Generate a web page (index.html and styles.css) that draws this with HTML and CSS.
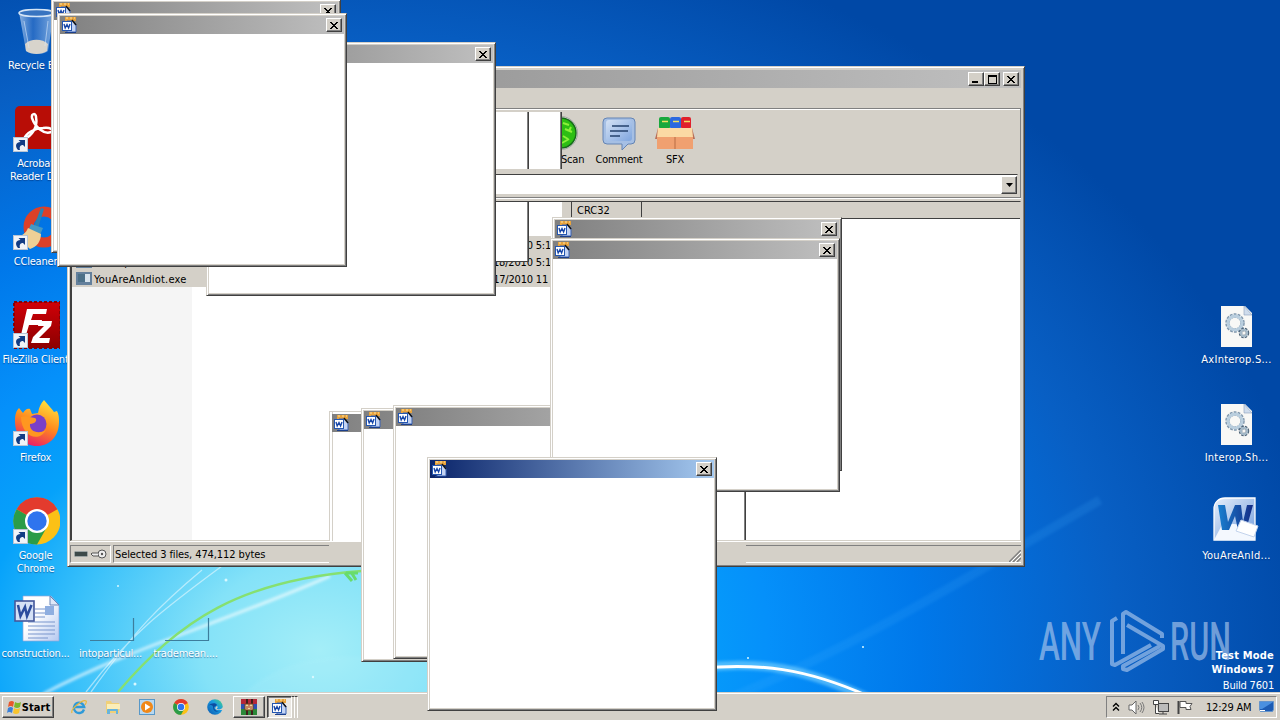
FILE: index.html
```html
<!doctype html>
<html>
<head>
	<meta charset="utf-8">
	<title>Desktop</title>
	<link rel="stylesheet" href="styles.css">
</head>
<body>
<svg class="defs" width="0" height="0">
	<defs>
		<linearGradient id="gFox" x1="0.7" y1="0" x2="0.3" y2="1"><stop offset="0" stop-color="#ffe23c"/><stop offset="0.5" stop-color="#ff8a1e"/><stop offset="1" stop-color="#e8196b"/></linearGradient>
		<linearGradient id="gRed" x1="0" y1="0" x2="0" y2="1"><stop offset="0" stop-color="#d00008"/><stop offset="1" stop-color="#8c0000"/></linearGradient>
		<linearGradient id="gPage" x1="0" y1="0" x2="1" y2="1"><stop offset="0.4" stop-color="#fff"/><stop offset="1" stop-color="#b4c8f0"/></linearGradient>
		<linearGradient id="gBlue" x1="0" y1="0" x2="1" y2="1"><stop offset="0" stop-color="#e8f0fb"/><stop offset="1" stop-color="#6f9bdc"/></linearGradient>
		<linearGradient id="gW" x1="0" y1="0" x2="1" y2="0"><stop offset="0" stop-color="#1a80d0"/><stop offset="1" stop-color="#142c86"/></linearGradient>
		<linearGradient id="gEdge" x1="0" y1="1" x2="1" y2="0"><stop offset="0" stop-color="#0c58b0"/><stop offset="0.6" stop-color="#1a9ce0"/><stop offset="1" stop-color="#4fd878"/></linearGradient>
		<linearGradient id="gBin" x1="0" y1="0" x2="1" y2="0"><stop offset="0" stop-color="#bcd4f0" stop-opacity=".75"/><stop offset="0.4" stop-color="#3b78cc" stop-opacity=".6"/><stop offset="1" stop-color="#b4d0f0" stop-opacity=".7"/></linearGradient>
	</defs>
	<symbol id="word16" viewBox="0 0 16 16">
		<rect x="4" y="0" width="11" height="4" fill="#e8a33c"/>
		<path d="M5 1h2M9 1h2M13 1h1" stroke="#fbe3a8"/>
		<path d="M6 4h6l3 3v8H6z" fill="#c4d4f4" stroke="#3a62b4"/>
		<path d="M11 3l4 5" stroke="#111" stroke-width="1.400"/>
		<rect x="1.500" y="4.500" width="9" height="9" fill="#fff" stroke="#2456b0"/>
		<path d="M3 7l1.200 4L6 7.500 7.600 11 9 7" fill="none" stroke="#1746a8" stroke-width="1.400"/>
		<path d="M4 15.500h11" stroke="#1b3f8c"/>
	</symbol>
	<symbol id="x" viewBox="0 0 8 7"><path d="M0 0h2v1h1v1h2v-1h1v-1h2v1h-1v1h-1v1h-1v1h1v1h1v1h1v1h-2v-1h-1v-1h-2v1h-1v1h-2v-1h1v-1h1v-1h1v-1h-1v-1h-1v-1h-1z"/></symbol>
	<symbol id="chrome" viewBox="0 0 48 48">
		<circle cx="24" cy="24" r="23.500" fill="#fbc116"/>
		<path d="M24 24L3.600 12.200A23.500 23.500 0 0 1 44.400 12.200z" fill="#e33b2e"/>
		<path d="M3.600 12.200A23.500 23.500 0 0 0 24 47.500L34 30 24 24z" fill="#2b9c48"/>
		<circle cx="24" cy="24" r="12" fill="#fff"/><circle cx="24" cy="24" r="9.700" fill="#2f74ee"/>
	</symbol>
	<symbol id="shortcut" viewBox="0 0 15 15">
		<rect x=".5" y=".5" width="14" height="14" fill="#f0f3f8" stroke="#b8c4d4"/>
		<path d="M5 13C1.500 9 3 5 7.500 5L5.500 3H12v7L10 8C8 8 6 9 7 13z" fill="#123c84"/>
	</symbol>
	<symbol id="dll" viewBox="0 0 48 48">
		<path d="M8 5h24l7 7v34H8z" fill="#f8f8f6"/><path d="M31 5v9h8z" fill="#cfdcec" stroke="#8aa0bc" stroke-width=".6"/>
		<circle cx="22" cy="22" r="7.500" fill="none" stroke="#7f96ac" stroke-width="4.500" stroke-dasharray="2.400 1"/>
		<circle cx="22" cy="22" r="7" fill="none" stroke="#b9cede" stroke-width="3"/>
		<circle cx="31" cy="32" r="3.500" fill="none" stroke="#4e6478" stroke-width="3.500" stroke-dasharray="2 .8"/>
		<circle cx="31" cy="32" r="3.200" fill="none" stroke="#a5bac9" stroke-width="2"/>
	</symbol>
</svg>

<div class="desktop">
	<svg class="wallpaper" width="1280" height="720" viewBox="0 0 1280 720" fill="none">
		<path class="haze" d="M245 692C290 655 330 652 430 660V692z" fill="#b8f2fa" opacity=".15"/>
		<path class="haze" d="M43 694C130 648 220 624 330 576" stroke="#fff" stroke-width="2.500" opacity=".75"/>
		<path d="M86 692C130 634 165 608 222 566M91 692C135 630 160 605 202 570" stroke="#fff" stroke-width="1.300" opacity=".5"/>
		<path d="M118 692C180 620 240 580 362 571" stroke="#86e070" stroke-width="2.300"/>
		<path d="M345 573l7 8M351 572l5 8M346 573h12" stroke="#68dc6c" stroke-width="3"/>
		<path class="haze" d="M700 710C830 660 930 600 1100 500" stroke="#4cb4ff" stroke-width="9" opacity=".14"/>
		<path class="haze" d="M700 668C760 660 805 668 872 700" stroke="#7fd4ff" stroke-width="9" opacity=".6"/>
		<path d="M700 668C760 663 805 668 868 696" stroke="#fff" stroke-width="3"/>
		<g fill="#d8f8ff"><circle cx="226" cy="580" r="1.500"/><circle cx="118" cy="586" r="1"/><circle cx="135" cy="684" r="1.500"/><circle cx="313" cy="677" r="1.200"/><circle cx="863" cy="647" r="1"/><circle cx="748" cy="658" r="1"/></g>
	</svg>

	<div class="icons left">
		<div class="icon">
			<svg viewBox="0 0 48 48"><path d="M7 5l7 39c5 4 18 4 22 0l6-39z" fill="url(#gBin)"/><path d="M13 37c6-6 18-5 23 0l-1 7c-5 4-16 4-21 0z" fill="#d8d4cc"/><ellipse cx="24.500" cy="6" rx="17.500" ry="3.500" fill="#3874c0" stroke="#d5e5f6" stroke-width="1.500"/><path d="M12 14l5 27M36 14l-3 25" stroke="#d8e8fa" opacity=".6"/></svg>
			<span>Recycle Bin</span>
		</div>
		<div class="icon">
			<svg viewBox="0 0 48 48"><rect x="3" y="1" width="44" height="43" rx="5" fill="#b80d06"/><path d="M12 34c8-3 14-12 12-22 0-4-5-4-4 1 3 9 12 17 19 14 4-2-1-5-8-4-8 0-17 5-19 11z" fill="none" stroke="#fff" stroke-width="2.500"/><use href="#shortcut" x="1" y="32" width="15" height="15"/></svg>
			<span>Acrobat<br>Reader DC</span>
		</div>
		<div class="icon">
			<svg viewBox="0 0 48 48"><circle cx="32" cy="24" r="15.500" fill="none" stroke="#dc4028" stroke-width="10"/><path d="M29 5l3 1-6 19-4-2z" fill="#2882b4"/><path d="M19 21l12 4-3 7-11-6z" fill="#4599c4"/><path d="M16 25l13 6c0 7-4 13-11 15L5 34c5-1 9-4 11-9z" fill="#eed096"/><use href="#shortcut" x="1" y="32" width="15" height="15"/></svg>
			<span>CCleaner</span>
		</div>
		<div class="icon">
			<svg viewBox="0 0 48 48"><rect x="2" y="1" width="46" height="46" fill="url(#gRed)" stroke="#850008" stroke-width="2" stroke-dasharray="3 2"/><path d="M15 8h20l-1 5H21l-2 6h11l-1 5H17l-3 10H9z" fill="#fff"/><path d="M27 20h13l-1 5-12 12h11l-1 5H19l2-6 11-11h-6z" fill="#fff"/><use href="#shortcut" x="1" y="32" width="15" height="15"/></svg>
			<span>FileZilla Client</span>
		</div>
		<div class="icon">
			<svg viewBox="0 0 48 48"><path d="M3 22c0-6 1-10 4-13l4 5c2-3 4-5 7-4l2 5 6-1c1-6 3-10 6-13 4 5 8 9 10 12l3-1c2 4 2 7 2 11 0 14-9 24-22 24S3 37 3 22z" fill="url(#gFox)"/><circle cx="25" cy="25" r="9.500" fill="#7a3fc8"/><path d="M9 18c5-2 8 0 14 1 3 2 0 6-5 6-1 7 8 11 16 6-8 14-25 5-25-13z" fill="#ff9720"/><use href="#shortcut" x="1" y="32" width="15" height="15"/></svg>
			<span>Firefox</span>
		</div>
		<div class="icon">
			<svg viewBox="0 0 48 48"><use href="#chrome" x="1" y="0" width="48" height="48"/><use href="#shortcut" x="1" y="32" width="15" height="15"/></svg>
			<span>Google<br>Chrome</span>
		</div>
		<div class="icon">
			<svg viewBox="0 0 48 48"><path d="M11 1h28l8 9v36H11z" fill="url(#gPage)" stroke="#8fa8d8" stroke-width=".7"/><path d="M38 1v9h9z" fill="#dfe8f8" stroke="#6a86b8"/><path d="M23 14h10M23 18h10M23 22h10M16 27h27M16 31h27M16 35h27M16 39h27M16 43h20" stroke="#7895cc"/><rect x="33" y="11" width="9" height="9" fill="#8eaee0"/><rect x="3" y="6" width="19" height="20" fill="#d5e1f6" stroke="#44589c" stroke-width="1.600"/><path d="M6 10l2.500 11L13 12l2 9 4.500-11" fill="none" stroke="#2b4c9e" stroke-width="2.500"/></svg>
			<span>construction...</span>
		</div>
		<div class="icon">
			<svg viewBox="0 0 48 48"><path d="M3 45.500h43.500V23" fill="none" stroke="#3d7d9c" stroke-width="1.200"/></svg>
			<span>intoparticul...</span>
		</div>
		<div class="icon">
			<svg viewBox="0 0 48 48"><path d="M3 45.500h43.500V23" fill="none" stroke="#3d7d9c" stroke-width="1.200"/></svg>
			<span>trademean....</span>
		</div>
	</div>

	<div class="icons right">
		<div class="icon">
			<svg><use href="#dll"/></svg>
			<span>AxInterop.S...</span>
		</div>
		<div class="icon">
			<svg><use href="#dll"/></svg>
			<span>Interop.Sh...</span>
		</div>
		<div class="icon">
			<svg viewBox="0 0 48 48"><path d="M1 43V12C1 5 6 1 12 1h30v42z" fill="url(#gBlue)" stroke="#fff" stroke-width="1.300"/><path d="M1 43l9-17 32 3v14z" fill="#f4f8fe"/><path d="M5 8h7l3 17 7-17h6l2 17 4-17h-3V8h9l-7 25h-8l-3-14-6 14H9z" fill="url(#gW)"/><path d="M28 23l17 6-4 11-18-6z" fill="#fff" stroke="#c3d3ec"/></svg>
			<span>YouAreAnId...</span>
		</div>
	</div>

	<svg class="watermark" width="196" height="66" viewBox="0 0 196 66">
		<text x="1" y="52" textLength="62" lengthAdjust="spacingAndGlyphs">ANY</text>
		<text x="132" y="52" textLength="61" lengthAdjust="spacingAndGlyphs">RUN</text>
		<path d="M85 46V6l3-2 36 22v4M89 17l36 21v3L89 62l-4-1v-3l37-20M79 10l-5 3v43l3 1 36-20"/>
	</svg>
	<div class="build"><b>Test Mode</b><b>Windows 7</b><span>Build 7601</span></div>

	<div class="rar">
		<div class="titlebar">
			<button><svg viewBox="0 0 8 7"><path d="M0 5h6v2H0z"/></svg></button><button><svg class="max" viewBox="0 0 9 9"><path d="M0 0h9v9H0zM1 2v6h7V2z" fill-rule="evenodd"/></svg></button><button class="close"><svg><use href="#x"/></svg></button>
		</div>
		<div class="menu"></div>
		<div class="rebar">
			<div class="toolbar">
				<div class="tool scan">
					<svg viewBox="0 0 36 36"><circle cx="18" cy="18" r="16.500" fill="#fff" stroke="#777" stroke-width=".6"/><circle cx="18" cy="18" r="15" fill="#2dbe14" stroke="#17691a" stroke-width="1.500"/><path d="M20 8l6 2M22 14l7 3M20 21l5 3M28 12l-2 4M19 28l7-4" stroke="#8cf03a" stroke-width="2" fill="none"/></svg>
					<span>Scan</span>
				</div>
				<div class="tool">
					<svg viewBox="0 0 36 36"><path d="M6 3h24q4 0 4 4v18q0 4-4 4l-3 0-6 6 0-6H6q-4 0-4-4V7q0-4 4-4z" fill="#a5bfe4" stroke="#6484b4"/><rect x="5" y="5" width="26" height="21" rx="3" fill="url(#gBlue)" opacity=".7"/><path d="M11 11h17M9 16h18M9 21h10" stroke="#24426c" stroke-width="1.600"/></svg>
					<span>Comment</span>
				</div>
				<div class="tool">
					<svg class="wide" viewBox="0 0 40 36"><rect x="4" y="2" width="11" height="12" rx="2" fill="#18a83c"/><rect x="15" y="2" width="11" height="12" rx="2" fill="#2b68e0"/><rect x="26" y="2" width="10" height="12" rx="2" fill="#e0202c"/><path d="M4 6.500h32" stroke="#f0e060" stroke-width="1.500" stroke-dasharray="6 5" stroke-dashoffset="-3"/><path d="M3 13L0 24h40l-3-11z" fill="#b8705a"/><path d="M3 13h34l1 9H2z" fill="#fbd9a4"/><path d="M2 22h36v12H2z" fill="#f0a070"/><path d="M20 22v12" stroke="#b86c44"/></svg>
					<span>SFX</span>
				</div>
			</div>
			<div class="address"><button><svg viewBox="0 0 7 4"><path d="M0 0h7L3.500 4z"/></svg></button></div>
		</div>
		<div class="list">
			<div class="head"><span>CRC32</span></div>
			<div class="row parent"></div>
			<div class="row"><i></i><span></span><em>18/2010 5:1</em></div>
			<div class="row"><i></i><span>Interop.Sh</span><em>18/2010 5:1</em></div>
			<div class="row"><i></i><span>YouAreAnIdiot.exe</span><em class="exe">17/2010 11</em></div>
		</div>
		<div class="status">
			<div class="pane keys">
				<svg width="36" height="14" viewBox="0 0 36 14"><rect x="1.500" y="4.500" width="13" height="5" rx="1" fill="#3d4a4a" stroke="#9ca4a4"/><circle cx="29" cy="7" r="4" fill="#eee" stroke="#555"/><circle cx="29" cy="7" r="1.200" fill="#555"/><path d="M25 6h-6l-1 1 2 2h5" fill="#eee" stroke="#555"/></svg>
			</div>
			<div class="pane info">Selected 3 files, 474,112 bytes</div>
			<div class="gap"></div>
			<div class="pane end"><svg width="12" height="12" viewBox="0 0 12 12"><path d="M0 12L12 0M4 12l8-8M8 12l4-4" stroke="#808080" stroke-width="1.500"/><path d="M2 12L12 2M6 12l6-6" stroke="#fff"/></svg></div>
		</div>
	</div>

	<!-- leftovers of moved popups, painted over the archiver -->
	<div class="ghost g1"></div>
	<div class="ghost g2"></div>
	<div class="ghost g3"></div>
	<div class="ghost g4"></div>
	<div class="ghost g5"></div>

	<div class="popup p1"><div class="titlebar"><svg class="app"><use href="#word16"/></svg></div></div>
	<div class="popup p2"><div class="titlebar"><svg class="app"><use href="#word16"/></svg></div></div>
	<div class="popup p3"><div class="titlebar"><svg class="app"><use href="#word16"/></svg></div></div>
	<div class="popup p4"><div class="titlebar"><svg class="app"><use href="#word16"/></svg><button><svg><use href="#x"/></svg></button></div></div>
	<div class="popup p5"><div class="titlebar"><svg class="app"><use href="#word16"/></svg><button><svg><use href="#x"/></svg></button></div></div>
	<div class="popup p6"><div class="titlebar"><svg class="app"><use href="#word16"/></svg><button><svg><use href="#x"/></svg></button></div></div>
	<div class="popup p7"><div class="titlebar"><svg class="app"><use href="#word16"/></svg><button><svg><use href="#x"/></svg></button></div></div>
	<div class="popup p8"><div class="titlebar"><svg class="app"><use href="#word16"/></svg><button><svg><use href="#x"/></svg></button></div></div>

	<div class="taskbar">
		<button class="start">
			<svg width="16" height="16" viewBox="0 0 16 16"><path d="M3 3q3-2 5 0L7 8q-2-2-5 0z" fill="#e8582c"/><path d="M9 3q3 2 6 0l-1 5q-3 2-6 0z" fill="#7cb82c"/><path d="M2 9q3-2 5 0l-1 5q-3-2-5 0z" fill="#3a80d8"/><path d="M8 9q3 2 6 0l-1 5q-3 2-6 0z" fill="#f8c42c"/></svg>
			Start
		</button>
		<div class="quick">
			<svg viewBox="0 0 16 16"><path d="M13 10.500A5.200 5.200 0 1 1 13.200 8H4" fill="none" stroke="#2f9ad8" stroke-width="2.400"/><path d="M1 14C-1 10 12 0 15 2q1 1-1 4" fill="none" stroke="#e8b83c" stroke-width="1.200"/></svg>
			<svg viewBox="0 0 16 16"><path d="M1 2h5l1 2h7v10H1z" fill="#f0d078"/><path d="M2 5h13v5H2z" fill="#fbeeb8"/><path d="M2 15v-4q0-1 1-1h9q1 0 1 1v4h-2v-3H5v3z" fill="#68b4dc"/></svg>
			<svg viewBox="0 0 16 16"><rect x=".5" y=".5" width="15" height="15" fill="#b8d8f0" stroke="#5898c8"/><circle cx="8" cy="8" r="6" fill="#f08818"/><path d="M6 4.500v7l5.500-3.500z" fill="#fff"/></svg>
			<svg><use href="#chrome"/></svg>
			<svg viewBox="0 0 16 16"><circle cx="8" cy="8" r="7.800" fill="url(#gEdge)"/><path d="M7 9c0-2 3-2 3-3-1-3-7-2-9 1 2-2 5-1 5 1 0 4 3 6 8 4-3 1-6 0-7-3z" fill="#0c4ca0"/><path d="M10 7c2 2-1 2 0 3 2 1 5 0 6-2v3l-4 0c-4 0-5-2-2-4z" fill="#d4d0c8"/></svg>
		</div>
		<div class="tasks">
			<button><svg viewBox="0 0 16 16"><path d="M0 0h16v5H0z" fill="#b42838"/><path d="M0 5h16v5H0z" fill="#2c50b0"/><path d="M0 10h16v6H0z" fill="#2c8838"/><path d="M5 0h2v16H5zM10 0h2v16h-2z" fill="#40201c"/><path d="M4 5h8v6H4z" fill="#e8d8a0" stroke="#7a3c1c"/><path d="M6 7v3M8 5v4M10 7v3" stroke="#a03020"/></svg></button>
			<button class="pressed"><svg><use href="#word16"/></svg></button>
			<span class="sliver"></span><span class="sliver"></span>
		</div>
		<div class="tray">
			<svg width="8" height="10" viewBox="0 0 8 10"><path d="M1 4.500l3-3 3 3M1 8.500l3-3 3 3" fill="none" stroke="#000" stroke-width="1.400"/></svg>
			<svg width="17" height="15" viewBox="0 0 17 15"><path d="M1 5h3l4-4v13l-4-4H1z" fill="#fff" stroke="#666"/><path d="M10 5q2 2.500 0 5M12 3q3.500 4.500 0 9M14 2q4 5.500 0 11" fill="none" stroke="#777"/></svg>
			<svg width="16" height="15" viewBox="0 0 16 15"><rect x="5.500" y="3.500" width="10" height="8" fill="#bbb" stroke="#444"/><path d="M6 14h8M10 12v2" stroke="#444"/><path d="M.5.500h5v4h-5zM2.500 5v8.500H6" fill="#fff" stroke="#444"/></svg>
			<svg width="16" height="15" viewBox="0 0 16 15"><path d="M1.500 1v13" stroke="#444" stroke-width="2"/><path d="M3 1.500h6v2h6l-2 3 1 3H9v-2H3z" fill="#fff" stroke="#555"/></svg>
			<span class="clock">12:29 AM</span>
			<svg width="15" height="12" viewBox="0 0 15 12"><path d="M.5.500h14v8l-1 2h-12l-1-2z" fill="#1d5cb4" stroke="#6494cc"/><path d="M1 1h13L3 8H1z" fill="#4a90e0"/><path d="M1 9.500h5" stroke="#fff"/></svg>
		</div>
	</div>

	<div class="popup active p9"><div class="titlebar"><svg class="app"><use href="#word16"/></svg><button><svg><use href="#x"/></svg></button></div></div>
</div>
</body>
</html>
```

FILE: styles.css
```css
* {
    margin: 0;
    padding: 0;
    box-sizing: border-box;
}

body, button {
    font: 11px/13px "DejaVu Sans Condensed", "DejaVu Sans", sans-serif;
    letter-spacing: -0.2px;
}

body {
    overflow: hidden;
}

svg {
    display: block;
}

.defs {
    position: absolute;
}

.desktop {
    position: relative;
    width: 1280px;
    height: 720px;
    overflow: hidden;
    background: radial-gradient(1000px 750px at 320px 650px, #a4eef8 0%, #84e2f8 12%, #38c0fa 25%, #06a2fa 34%, #0590fa 45%, #0078ea 60%, #085fc4 80%, #0048a6 100%);
}

.wallpaper {
    position: absolute;
    left: 0;
    top: 0;
}

.haze {
    filter: blur(1.5px);
}

/* desktop icons */
.icons {
    position: absolute;
    top: 7px;
    display: grid;
    grid-auto-flow: column;
    grid-auto-columns: 75px;
    grid-template-rows: repeat(7, 98px);
}

.left {
    left: -2px;
}

.left .icon:nth-child(8),
.left .icon:nth-child(9) {
    grid-row: 7;
}

.right {
    left: 1199px;
    top: 301px;
    grid-template-rows: repeat(3, 98px);
    letter-spacing: 0.25px;
}

.icon {
    display: flex;
    flex-direction: column;
    align-items: center;
    color: #fff;
    text-align: center;
    white-space: nowrap;
    text-shadow: 0 1px 1px rgba(0, 30, 90, 0.5);
}

.icon svg {
    width: 48px;
    height: 48px;
    margin-bottom: 4px;
}

.watermark {
    position: absolute;
    left: 1038px;
    top: 608px;
    fill: rgba(185, 208, 240, 0.6);
}

.watermark text {
    font: 500 53px Roboto, sans-serif;
    letter-spacing: 0;
}

.watermark path {
    fill: none;
    stroke: rgba(185, 208, 240, 0.6);
    stroke-width: 4;
    stroke-linejoin: round;
}

.build {
    position: absolute;
    right: 6px;
    top: 649px;
    display: flex;
    flex-direction: column;
    align-items: flex-end;
    color: #fff;
    line-height: 14px;
}

.build b {
    letter-spacing: 0.2px;
}

.build span {
    margin-top: 2px;
}

/* windows */
.titlebar {
    display: flex;
    justify-content: flex-end;
    align-items: center;
    height: 18px;
    padding-right: 2px;
    background: linear-gradient(90deg, #808080, #c0c0c0);
}

button {
    display: flex;
    justify-content: center;
    align-items: center;
    background: #d4d0c8;
    border: 1px solid;
    border-color: #fff #404040 #404040 #fff;
    box-shadow: inset -1px -1px #808080;
    color: #000;
}

.titlebar button {
    width: 16px;
    height: 14px;
}

.titlebar button svg {
    width: 8px;
    height: 7px;
}

.titlebar button svg.max {
    width: 9px;
    height: 9px;
}

.rar {
    position: absolute;
    left: 67px;
    top: 66px;
    width: 958px;
    height: 501px;
    display: flex;
    flex-direction: column;
    padding: 2px 3px 2px 2px;
    background: #d4d0c8;
    border: 1px solid;
    border-color: #d4d0c8 #404040 #404040 #d4d0c8;
    box-shadow: inset 1px 1px #fff, inset -1px -1px #808080;
}

.rar > .titlebar {
    flex: none;
    margin-top: 1px;
}

.rar .close {
    margin-left: 3px;
}

.rar .titlebar button:first-child {
    padding-right: 1px;
}

.menu {
    height: 20px;
}

.rebar {
    height: 90px;
    border: 1px solid #808080;
    border-left: 0;
    box-shadow: inset 0 1px #fff, 0 1px #fff;
}

.toolbar {
    display: flex;
    height: 65px;
    padding: 6px 0 0 490px;
}

.tool {
    width: 56px;
    flex: none;
    display: flex;
    flex-direction: column;
    align-items: center;
    gap: 2px;
}

.tool svg {
    width: 36px;
    height: 36px;
}

.tool svg.wide {
    width: 40px;
}

.scan {
    width: 30px;
    align-items: flex-start;
    padding-left: 1px;
    margin-right: 1px;
}

.scan svg {
    margin-left: -18px;
}

.address {
    display: flex;
    justify-content: flex-end;
    height: 21px;
    margin-right: 2px;
    padding: 1px 0;
    background: #fff;
    border: 1px solid #404040;
    border-color: #404040 #d4d0c8 #d4d0c8;
}

.address button {
    width: 16px;
    height: 18px;
}

.address svg {
    width: 7px;
    height: 4px;
}

.list {
    flex: 1;
    margin-top: 3px;
    background: linear-gradient(90deg, #f5f5f5 120px, #fff 120px);
    border: 1px solid #404040;
    border-width: 1px 1px 1px 2px;
    border-color: #404040 #d4d0c8 #d4d0c8 #404040;
    box-shadow: 0 1px #fff;
}

.head {
    display: flex;
    height: 17px;
    padding-left: 499px;
    background: #d4d0c8;
    border-bottom: 1px solid #404040;
}

.head span {
    width: 71px;
    padding: 2px 0 0 5px;
    border: 1px solid #404040;
    border-width: 0 1px;
    letter-spacing: 0;
}

.row {
    display: flex;
    align-items: center;
    width: 479px;
    height: 17px;
    padding-left: 4px;
    background: #d4d0c8;
}

.row.parent {
    background: none;
}

.row i {
    width: 16px;
    height: 13px;
    background: linear-gradient(90deg, #4c7088 7px, #d8e4ee 7px);
    border: 1px solid #64809c;
    border-width: 2px 2px 3px;
}

.row span {
    margin-left: 2px;
    padding-top: 1px;
    letter-spacing: 0.2px;
}

.row em {
    margin-left: auto;
    padding-top: 1px;
    font-style: normal;
}

.row .exe {
    margin-right: 3px;
}

.status {
    display: flex;
    gap: 2px;
    height: 23px;
    padding: 4px 0 1px;
}

.pane {
    display: flex;
    align-items: center;
    border: 1px solid #808080;
    border-color: #808080 #fff #fff #808080;
}

.keys {
    width: 41px;
    padding-left: 2px;
}

.info {
    width: 216px;
    padding-left: 1px;
    border-right: 0;
    letter-spacing: -0.1px;
}

.gap {
    width: 413px;
}

.end {
    flex: 1;
    justify-content: flex-end;
    align-items: flex-end;
    border-width: 1px 0;
}

.ghost {
    position: absolute;
    background: #fff;
    border: 0 solid #404040;
    box-shadow: inset -1px 0 #808080;
}

.g1 {
    left: 490px;
    top: 112px;
    width: 39px;
    height: 57px;
    border-right-width: 1px;
}

.g2 {
    left: 529px;
    top: 112px;
    width: 33px;
    height: 57px;
    border-right-width: 1px;
}

.g3 {
    left: 490px;
    top: 202px;
    width: 39px;
    height: 60px;
    border-width: 0 1px 1px 0;
}

.g4 {
    left: 529px;
    top: 202px;
    width: 33px;
    height: 34px;
    box-shadow: none;
}

.g5 {
    left: 700px;
    top: 491px;
    width: 46px;
    height: 49px;
    border-right-width: 1px;
}

.popup {
    position: absolute;
    width: 290px;
    height: 254px;
    padding: 2px;
    background: #fff;
    border: 1px solid;
    border-color: #d4d0c8 #404040 #404040 #d4d0c8;
    box-shadow: inset 1px 1px #fff, inset -1px -1px #808080, inset 2px 2px #d4d0c8, inset -2px -2px #d4d0c8;
}

.popup .app {
    width: 16px;
    height: 16px;
    margin: 0 auto 0 1px;
}

.popup.active .titlebar {
    background: linear-gradient(90deg, #0a246a, #a6caf0);
}

.p1 {
    left: 329px;
    top: 411px;
    height: 130px;
    border-bottom: 0;
    box-shadow: inset 2px 0 #fff, inset 3px 0 #d4d0c8;
}

.p2 {
    left: 361px;
    top: 408px;
}

.p3 {
    left: 393px;
    top: 405px;
}

.p4 {
    left: 552px;
    top: 217px;
}

.p5 {
    left: 550px;
    top: 238px;
}

.p6 {
    left: 206px;
    top: 42px;
}

.p7 {
    left: 51px;
    top: -1px;
}

.p8 {
    left: 57px;
    top: 13px;
}

.p9 {
    left: 427px;
    top: 457px;
}

/* taskbar */
.taskbar {
    position: absolute;
    left: 0;
    right: 0;
    bottom: 0;
    height: 28px;
    display: flex;
    align-items: center;
    padding: 1px 3px 0 2px;
    background: #d4d0c8;
    border-top: 1px solid #d4d0c8;
    box-shadow: inset 0 1px #fff;
}

.start {
    width: 52px;
    height: 22px;
    font-weight: bold;
    letter-spacing: 0.1px;
}

.quick {
    display: flex;
    gap: 18px;
    margin-left: 17px;
}

.quick svg, .tasks svg {
    width: 16px;
    height: 16px;
}

.tasks {
    display: flex;
    margin-left: 10px;
}

.tasks button {
    width: 32px;
    height: 22px;
}

.tasks .pressed {
    width: 25px;
    margin-left: 2px;
    padding-right: 2px;
    background: #ebe8e3;
    border-color: #404040 #fff #fff #404040;
    box-shadow: inset 1px 1px #808080;
}

.sliver {
    width: 3px;
    border-right: 1px solid #fff;
    border-top: 1px solid #404040;
}

.tray {
    display: flex;
    align-items: center;
    width: 171px;
    height: 22px;
    margin-left: auto;
    padding: 0 1px 0 5px;
    border: 1px solid;
    border-color: #808080 #fff #fff #808080;
    gap: 8px;
}

.clock {
    margin-left: 5px;
    white-space: nowrap;
}
```
